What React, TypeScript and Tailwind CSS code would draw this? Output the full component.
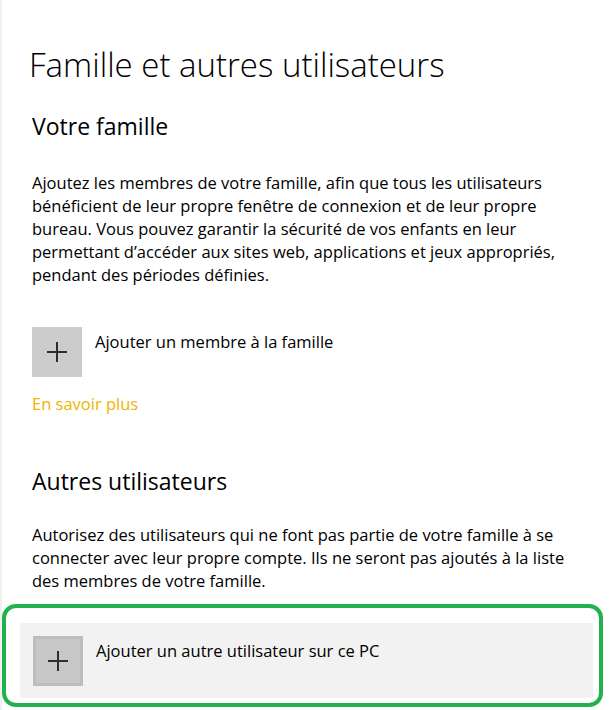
import React from "react";

function PlusTile({ framed }: { framed?: boolean }) {
  return (
    <div
      className={
        framed
          ? "flex h-[50px] w-[50px] shrink-0 items-center justify-center border-[3px] border-[#bdbdbd] bg-[#c7c7c7]"
          : "flex h-[50px] w-[50px] shrink-0 items-center justify-center bg-[#cccccc]"
      }
    >
      <svg width="20" height="20" viewBox="0 0 20 20" aria-hidden="true">
        <path d="M0 10H20M10 0V20" stroke="#2e2e2e" strokeWidth="2" fill="none" />
      </svg>
    </div>
  );
}

export default function App() {
  return (
    <div
      className="flex h-[710px] w-[613px] bg-white text-black"
      style={{ fontFamily: '"Open Sans", "Noto Sans", sans-serif' }}
    >
      <div className="w-[2px] shrink-0 bg-[#f0f0f0]" />
      <div className="flex flex-1 flex-col pl-[30px] pt-[45px]">
        <h1 className="-ml-[3px] text-[33px] font-light leading-[40px]">
          Famille et autres utilisateurs
        </h1>

        <h2 className="mt-[27px] text-[23px] leading-[28px]">Votre famille</h2>

        <p className="mt-[31px] w-[548px] text-[16.5px] leading-[23px]">
          Ajoutez les membres de votre famille, afin que tous les utilisateurs bénéficient de leur
          propre fenêtre de connexion et de leur propre bureau. Vous pouvez garantir la sécurité de
          vos enfants en leur permettant d’accéder aux sites web, applications et jeux appropriés,
          pendant des périodes définies.
        </p>

        <div className="mt-[41px] flex items-start gap-[13px]">
          <PlusTile />
          <span className="mt-[3px] text-[16.5px] leading-[23px]">Ajouter un membre à la famille</span>
        </div>

        <a className="mt-[15px] text-[16.5px] leading-[23px] text-[#f0b400]">En savoir plus</a>

        <h2 className="mt-[52px] text-[23px] leading-[28px]">Autres utilisateurs</h2>

        <p className="mt-[28px] w-[548px] text-[16.5px] leading-[23px]">
          Autorisez des utilisateurs qui ne font pas partie de votre famille à se connecter avec
          leur propre compte. Ils ne seront pas ajoutés à la liste des membres de votre famille.
        </p>

        <div className="relative -ml-[12px] mt-[31px] w-[573px]">
          <div className="flex h-[75px] items-start gap-[13px] bg-[#f2f2f2] pl-[13px] pt-[13px]">
            <PlusTile framed />
            <span className="mt-[3px] text-[16.5px] leading-[23px]">
              Ajouter un autre utilisateur sur ce PC
            </span>
          </div>
          <div className="pointer-events-none absolute -bottom-[9px] -left-[18px] -right-[10px] -top-[19px] rounded-[14px] border-4 border-[#22b14c]" />
        </div>
      </div>
    </div>
  );
}
